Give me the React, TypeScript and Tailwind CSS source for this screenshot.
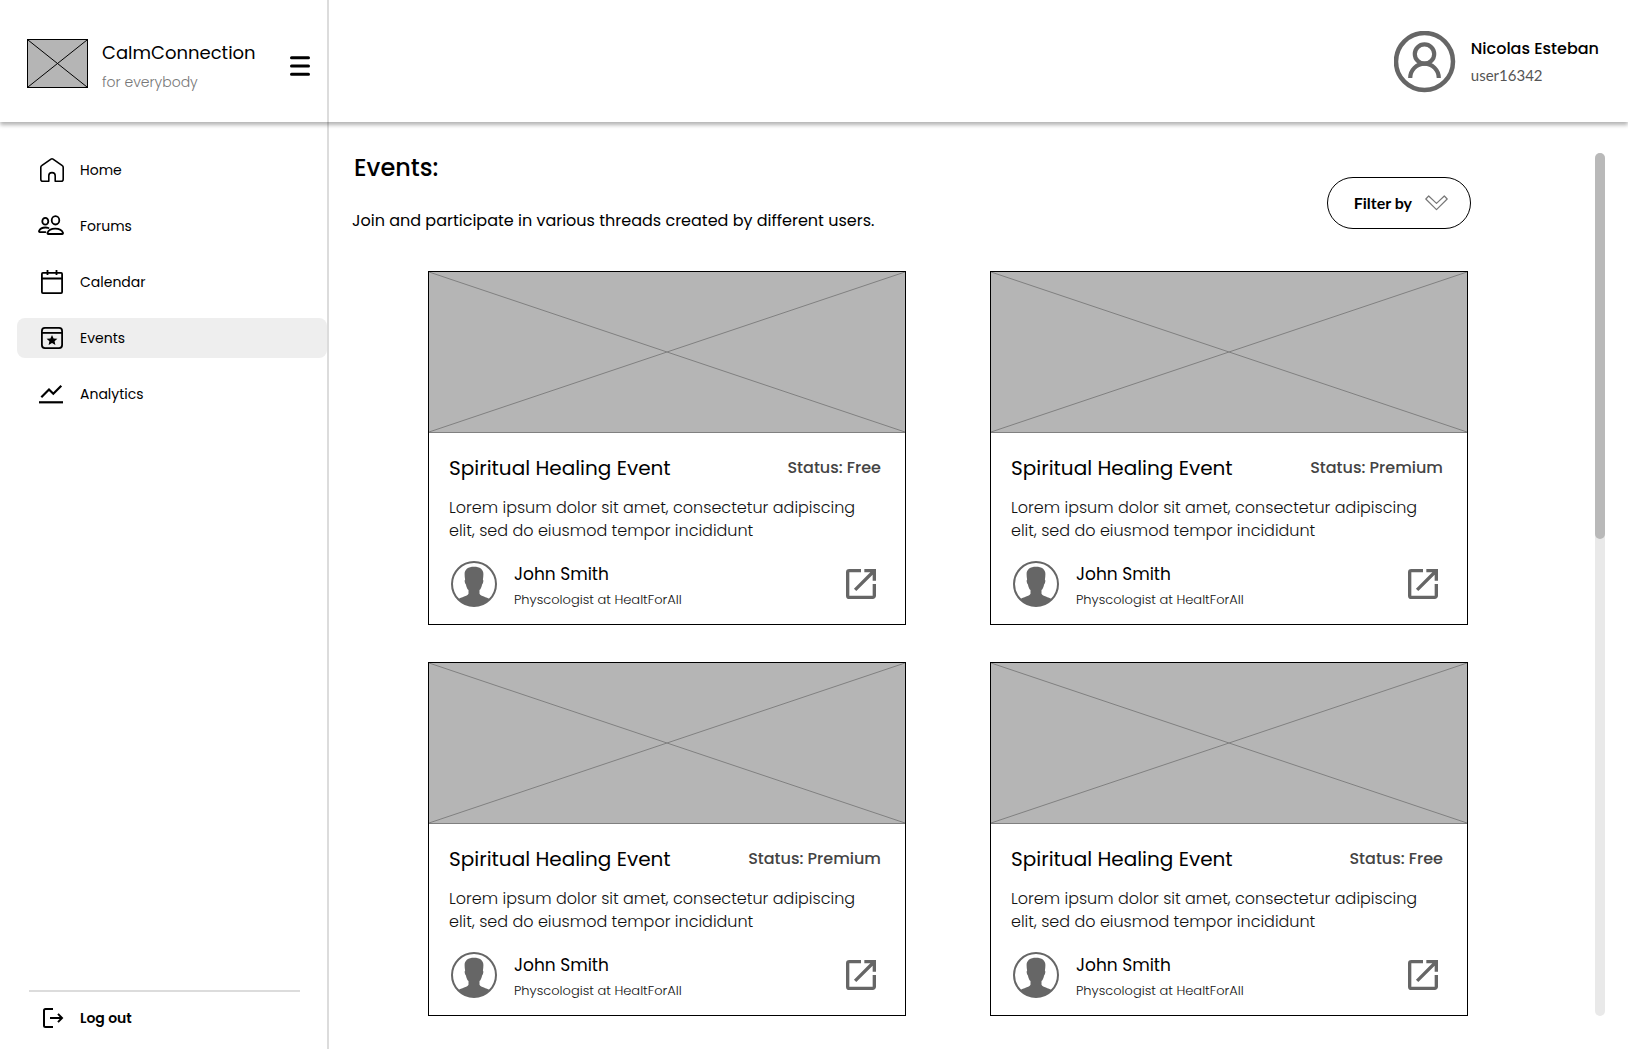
import React from "react";

const navItems = [
  { label: "Home", icon: <HomeIcon /> },
  { label: "Forums", icon: <ForumsIcon /> },
  { label: "Calendar", icon: <CalendarIcon /> },
  { label: "Events", icon: <EventsIcon />, active: true },
  { label: "Analytics", icon: <AnalyticsIcon /> },
];

const events = [
  { id: 1, status: "Free" },
  { id: 2, status: "Premium" },
  { id: 3, status: "Premium" },
  { id: 4, status: "Free" },
];

function HomeIcon() {
  return (
    <svg viewBox="0 0 28 28" className="size-7" fill="none" stroke="currentColor" strokeWidth="1.6" strokeLinejoin="round" aria-hidden="true">
      <path d="M10.8 25.2H4.8a2 2 0 0 1-2-2V11.4a2 2 0 0 1 .9-1.7L13 3.1a1.9 1.9 0 0 1 2 0l9.300 6.600a2 2 0 0 1 .9 1.700v11.800a2 2 0 0 1-2 2h-6v-5.400a3.200 3.200 0 0 0-6.400 0z" />
    </svg>
  );
}

function ForumsIcon() {
  return (
    <svg viewBox="0 0 28 28" className="size-7" fill="none" stroke="currentColor" strokeWidth="1.8" strokeLinejoin="round" strokeLinecap="round" aria-hidden="true">
      <ellipse cx="17.500" cy="8.300" rx="3.800" ry="4.200" />
      <ellipse cx="7.300" cy="9.300" rx="3" ry="3.400" />
      <path d="M10.300 22c-.7 0-1-.5-.8-1.100.9-2.600 3.900-4.300 7.700-4.300s6.900 1.700 7.800 4.300c.2.600-.2 1.100-.8 1.100z" />
      <path d="M10.500 16c-1-.4-2-.5-3.100-.5-3 0-5.400 1.300-6.300 3.400-.3.700.1 1.200.7 1.200h5.600" />
    </svg>
  );
}

function CalendarIcon() {
  return (
    <svg viewBox="0 0 28 28" className="size-7" fill="none" stroke="currentColor" strokeWidth="1.800" strokeLinejoin="round" aria-hidden="true">
      <rect x="3.900" y="4.900" width="20.200" height="20.200" rx="1" />
      <path d="M3.900 10.500h20.200M9.500 2v5M18.500 2v5" />
    </svg>
  );
}

function EventsIcon() {
  return (
    <svg viewBox="0 0 28 28" className="size-7" fill="none" stroke="currentColor" strokeWidth="1.800" aria-hidden="true">
      <rect x="3.900" y="3.900" width="20.200" height="20.200" rx="3" />
      <path d="M3.900 8.900h20.200" />
      <path
        d="M14 11l1.600 3.400 3.800.4-2.800 2.500.8 3.700-3.400-1.900-3.400 1.900.8-3.700-2.800-2.500 3.800-.4z"
        fill="currentColor"
        stroke="none"
      />
    </svg>
  );
}

function AnalyticsIcon() {
  return (
    <svg viewBox="0 0 28 28" className="size-7" fill="none" stroke="currentColor" strokeWidth="2.200" aria-hidden="true">
      <path d="M3.300 17.300l7.700-7.800 4.300 4.300 8-8" />
      <path d="M1 22.300h24" />
    </svg>
  );
}

function LogoutIcon() {
  return (
    <svg viewBox="0 0 28 28" className="size-7" fill="none" stroke="currentColor" strokeWidth="2" aria-hidden="true">
      <path d="M15 5H7.500A1.500 1.500 0 0 0 6 6.500v15A1.500 1.500 0 0 0 7.500 23H15" />
      <path d="M12 14h12M20 9.900l4 4.100-4 4.100" />
    </svg>
  );
}

function MenuIcon() {
  return (
    <svg viewBox="0 0 20 20" className="size-5" stroke="currentColor" strokeWidth="3" strokeLinecap="round" aria-hidden="true">
      <path d="M1.500 1.700h17M1.500 10h17M1.500 18.300h17" />
    </svg>
  );
}

function UserIcon() {
  return (
    <svg viewBox="0 0 62 62" className="size-[62px] shrink-0 text-[#666]" fill="none" stroke="currentColor" aria-hidden="true">
      <circle cx="30.500" cy="30.500" r="28.500" strokeWidth="4.500" />
      <circle cx="30.500" cy="23" r="9.700" strokeWidth="4.200" />
      <path d="M16.200 47a14.300 14.300 0 0 1 28.600 0" strokeWidth="4.200" />
    </svg>
  );
}

function AvatarIcon() {
  return (
    <svg viewBox="0 0 46 46" className="size-[46px] shrink-0 text-[#666]" aria-hidden="true">
      <circle cx="23" cy="23" r="22" fill="none" stroke="currentColor" strokeWidth="2" />
      <path
        d="M23 5.700c-5.800 0-9.400 2.500-9.400 7.300 0 2 .2 3.800.5 5.400-.8.600-.5 3.600.8 5 .5 2.600 1.300 4.400 2.600 5.700v3.700c-1.500 2.600-6.700 3.200-10.700 5.500A22 22 0 0 0 23 45a22 22 0 0 0 16.200-6.700c-4-2.300-9.200-2.900-10.700-5.500v-3.700c1.300-1.300 2.100-3.100 2.600-5.700 1.300-1.400 1.600-4.400.8-5 .3-1.600.5-3.400.5-5.400 0-4.800-3.600-7.300-9.400-7.300z"
        fill="currentColor"
      />
    </svg>
  );
}

function OpenIcon() {
  return (
    <svg viewBox="0 0 24 24" className="size-10 text-[#666]" fill="currentColor" aria-hidden="true">
      <path d="M19 19H5V5h7V3H5a2 2 0 0 0-2 2v14a2 2 0 0 0 2 2h14c1.100 0 2-.9 2-2v-7h-2v7zM14 3v2h3.590l-9.830 9.830 1.410 1.410L19 6.410V10h2V3h-7z" />
    </svg>
  );
}

function ChevronOutline() {
  return (
    <svg viewBox="0 0 23 16" className="h-4 w-[23px]" fill="none" stroke="#777" strokeWidth="1.2" strokeLinejoin="round" aria-hidden="true">
      <path d="M.8 4L3.700 1l7.800 7.400L19.300 1l2.900 3L11.500 14.700z" />
    </svg>
  );
}

function Crossed({ className, color }: { className: string; color: string }) {
  return (
    <svg className={className} preserveAspectRatio="none" viewBox="0 0 100 100" stroke={color} aria-hidden="true">
      <path d="M0 0L100 100M100 0L0 100" vectorEffect="non-scaling-stroke" />
    </svg>
  );
}

function EventCard({ status }: { status: string }) {
  return (
    <article className="border border-black bg-white">
      <Crossed className="block h-[161px] w-full border-b border-[#808080] bg-[#b5b5b5]" color="#808080" />
      <div className="pt-[21px] pr-6 pb-[17px] pl-5">
        <div className="flex items-center justify-between">
          <h2 className="text-xl leading-7">Spiritual Healing Event</h2>
          <p className="text-base leading-7 font-medium text-[#444]">Status: {status}</p>
        </div>
        <p className="mt-[14px] max-w-[425px] text-base leading-[23px] font-light text-[#111]">
          Lorem ipsum dolor sit amet, consectetur adipiscing elit, sed do eiusmod tempor incididunt
        </p>
        <div className="mt-[19px] flex h-[46px] items-center pl-0.5">
          <AvatarIcon />
          <div className="ml-[17px] pt-1.5">
            <h3 className="text-[17px] leading-[26px]">John Smith</h3>
            <p className="text-[13px] leading-[26px] font-light text-[#111]">Physcologist at HealtForAll</p>
          </div>
          <button type="button" aria-label="Open event" className="ml-auto">
            <OpenIcon />
          </button>
        </div>
      </div>
    </article>
  );
}

export default function App() {
  return (
    <div className="flex min-h-screen flex-col bg-white pb-1 font-['Poppins','Inter',sans-serif] text-black">
      <header className="relative z-10 flex h-[122px] bg-white shadow-[0_3px_4px_rgba(0,0,0,0.3)]">
        <div className="flex w-[329px] shrink-0 items-center border-r-2 border-[#dcdcdc] pt-1 pr-[17px] pl-[27px]">
          <Crossed className="h-[49px] w-[61px] border border-black bg-[#b5b5b5]" color="#000" />
          <div className="ml-[14px] pt-2">
            <p className="text-lg leading-[30px]">CalmConnection</p>
            <p className="text-sm leading-7 font-light text-[#777]">for everybody</p>
          </div>
          <button type="button" aria-label="Toggle menu" className="ml-auto pt-1.5">
            <MenuIcon />
          </button>
        </div>
        <div className="flex flex-1 items-center justify-end gap-[15px] pt-0.5 pr-[29px]">
          <UserIcon />
          <div>
            <p className="text-base leading-[26px] font-medium">Nicolas Esteban</p>
            <p className="font-['Lato',sans-serif] text-[15px] leading-[26px] text-[#555]">user16342</p>
          </div>
        </div>
      </header>

      <div className="flex flex-1">
        <aside className="flex w-[329px] shrink-0 flex-col justify-between border-r-2 border-[#dcdcdc] pt-7">
          <nav aria-label="Main">
            <ul className="flex flex-col gap-4 pl-[17px]">
              {navItems.map((item) => (
                <li key={item.label}>
                  <a
                    href="#"
                    aria-current={item.active ? "page" : undefined}
                    className={
                      item.active
                        ? "flex h-10 items-center gap-[14px] rounded-lg bg-[#eee] pl-[21px] text-sm"
                        : "flex h-10 items-center gap-[14px] rounded-lg pl-[21px] text-sm"
                    }
                  >
                    {item.icon}
                    {item.label}
                  </a>
                </li>
              ))}
            </ul>
          </nav>
          <div className="pr-[27px] pb-[11px] pl-[29px]">
            <button type="button" className="flex w-full items-center gap-[14px] border-t-2 border-[#dcdcdc] pt-3 pb-1.5 pl-[9px] text-sm font-semibold">
              <LogoutIcon />
              Log out
            </button>
          </div>
        </aside>

        <main className="flex flex-1 pt-[31px] pr-[23px] pb-[33px]">
          <div className="flex-1">
            <div className="flex items-end justify-between pr-[124px] pl-[23px]">
              <div>
                <h1 className="pl-0.5 text-2xl leading-[30px] font-medium">Events:</h1>
                <p className="mt-[26px] text-base leading-6">Join and participate in various threads created by different users.</p>
              </div>
              <button
                type="button"
                aria-haspopup="menu"
                className="mb-1 flex h-[52px] items-center gap-[13px] rounded-full border border-black pr-[22px] pl-[26px] font-['Lato',sans-serif] text-base font-bold"
              >
                Filter by
                <ChevronOutline />
              </button>
            </div>
            <div className="mt-[38px] grid grid-cols-2 gap-x-[84px] gap-y-[37px] pr-[127px] pl-[99px]">
              {events.map((event) => (
                <EventCard key={event.id} status={event.status} />
              ))}
            </div>
          </div>
          <div className="w-2.5 rounded-full bg-[#e9e9e9]">
            <div className="h-[386px] rounded-full bg-[#b9b9b9]" />
          </div>
        </main>
      </div>
    </div>
  );
}
